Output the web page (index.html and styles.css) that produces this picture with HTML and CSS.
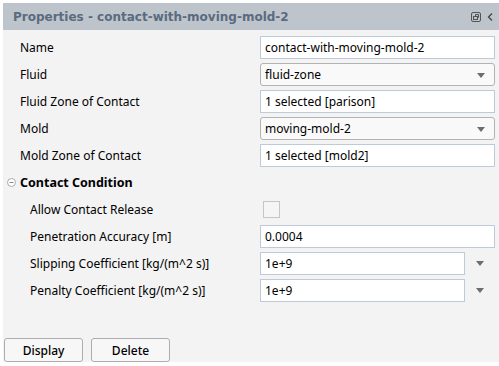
FILE: index.html
```html
<!DOCTYPE html>
<html>
<head>
<meta charset="utf-8">
<link rel="stylesheet" href="styles.css">
</head>
<body>
<div class="panel">
  <div class="titlebar">
    <span class="title">Properties - contact-with-moving-mold-2</span>
    <span class="tools">
      <svg class="ico" width="10" height="10" viewBox="0 0 10 10"><rect x="0.5" y="0.5" width="9" height="9" rx="1.5" fill="none" stroke="#555" stroke-width="1"/><rect x="2.5" y="4.5" width="4" height="3" fill="none" stroke="#555" stroke-width="1"/><path d="M4.5 4.5V2.5h3v3h-1" fill="none" stroke="#555" stroke-width="1"/></svg>
      <svg class="ico" width="6" height="10" viewBox="0 0 6 10"><path d="M5 1.5L1.5 5L5 8.5" fill="none" stroke="#444" stroke-width="1.3"/></svg>
    </span>
  </div>
  <div class="body">
    <div class="row"><span class="label">Name</span><div class="field input">contact-with-moving-mold-2</div></div>
    <div class="row"><span class="label">Fluid</span><div class="field select">fluid-zone<span class="arrow"></span></div></div>
    <div class="row"><span class="label">Fluid Zone of Contact</span><div class="field input">1 selected [parison]</div></div>
    <div class="row"><span class="label">Mold</span><div class="field select">moving-mold-2<span class="arrow"></span></div></div>
    <div class="row"><span class="label">Mold Zone of Contact</span><div class="field input">1 selected [mold2]</div></div>
    <div class="group">
      <svg class="collapse" width="9" height="9" viewBox="0 0 9 9"><circle cx="4.5" cy="4.5" r="4" fill="#fff" stroke="#aaa"/><path d="M2.5 4.5h4" stroke="#888"/></svg>
      <span class="gtitle">Contact Condition</span>
    </div>
    <div class="row sub"><span class="label">Allow Contact Release</span><div class="fieldwrap"><span class="check"></span></div></div>
    <div class="row sub"><span class="label">Penetration Accuracy [m]</span><div class="field input">0.0004</div></div>
    <div class="row sub"><span class="label">Slipping Coefficient [kg/(m^2 s)]</span><div class="combo"><div class="field input">1e+9</div><span class="arrow"></span></div></div>
    <div class="row sub"><span class="label">Penalty Coefficient [kg/(m^2 s)]</span><div class="combo"><div class="field input">1e+9</div><span class="arrow"></span></div></div>
    <div class="spacer"></div>
    <div class="buttons">
      <button class="btn">Display</button>
      <button class="btn">Delete</button>
    </div>
  </div>
</div>
</body>
</html>
```
FILE: styles.css
```css
html, body {
  margin: 0;
  padding: 0;
  background: #ffffff;
}
.panel {
  width: 496px;
  height: 359px;
  margin: 3px 0 0 3px;
  display: flex;
  flex-direction: column;
  font-family: "Noto Sans", sans-serif;
  font-size: 12px;
  color: #000;
}
.titlebar {
  height: 27px;
  background: #bec4cb;
  display: flex;
  align-items: center;
  justify-content: space-between;
  padding: 0 6px 0 10px;
  flex: none;
}
.title {
  font-family: "DejaVu Sans", sans-serif;
  font-weight: bold;
  font-size: 12px;
  color: #5b6b7f;
}
.tools {
  display: flex;
  align-items: center;
  gap: 6px;
}
.ico { display: block; }
.body {
  flex: 1;
  background: #f3f3f3;
  display: flex;
  flex-direction: column;
  padding-top: 4px;
}
.row {
  height: 27px;
  display: flex;
  align-items: center;
}
.label {
  box-sizing: border-box;
  width: 257px;
  padding-left: 17px;
  flex: none;
}
.row.sub .label { padding-left: 27px; }
.field {
  box-sizing: border-box;
  width: 235px;
  height: 23px;
  display: flex;
  align-items: center;
  padding-left: 4px;
  position: relative;
}
.input {
  background: #ffffff;
  border: 1px solid #bccada;
}
.select {
  background: #f9f9f9;
  border: 1px solid #b3b3b3;
  border-radius: 3px;
}
.arrow {
  width: 0;
  height: 0;
  border-left: 4px solid transparent;
  border-right: 4px solid transparent;
  border-top: 5px solid #6d6d6d;
}
.select .arrow {
  position: absolute;
  right: 9px;
  top: 9px;
}
.combo {
  display: flex;
  align-items: center;
}
.combo .field { width: 205px; }
.combo .arrow { margin-left: 11px; }
.fieldwrap { padding-left: 3px; display: flex; }
.check {
  width: 15px;
  height: 15px;
  border: 1px solid #c6c6c6;
  background: #f5f5f5;
  display: block;
}
.group {
  height: 27px;
  display: flex;
  align-items: center;
  gap: 4px;
  padding-left: 4px;
}
.collapse { display: block; }
.gtitle { font-weight: bold; font-size: 12.5px; }
.spacer { flex: 1; }
.buttons {
  display: flex;
  gap: 8px;
  padding: 0 0 0 1px;
}
.btn {
  width: 79px;
  height: 24px;
  background: #f7f7f7;
  border: 1px solid #adadad;
  border-radius: 3px;
  font-family: "Noto Sans", sans-serif;
  font-size: 12px;
  font-weight: 500;
  color: #000;
  padding: 0;
}
```
